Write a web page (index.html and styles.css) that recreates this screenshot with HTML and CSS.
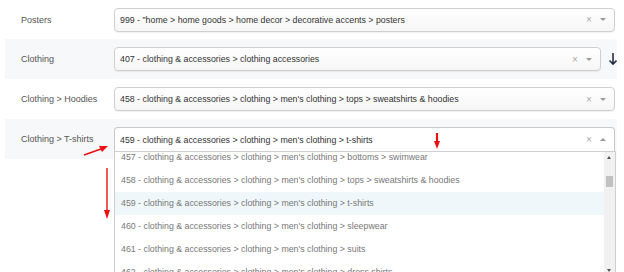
FILE: index.html
```html
<!DOCTYPE html>
<html lang="en">
  <head>
    <meta charset="UTF-8" />
    <title>Category mapping</title>
    <link rel="stylesheet" href="styles.css">
  </head>

  <body>
    <div class="form">
      <div class="row first">
        <label class="lbl">Posters</label>
        <div class="select">
          <span class="val">999 - "home &gt; home goods &gt; home decor &gt; decorative accents &gt; posters</span>
          <span class="clear">&times;</span>
          <span class="caret"></span>
        </div>
      </div>

      <div class="row alt arrowed">
        <label class="lbl">Clothing</label>
        <div class="select">
          <span class="val">407 - clothing &amp; accessories &gt; clothing accessories</span>
          <span class="clear">&times;</span>
          <span class="caret"></span>
        </div>
        <svg class="down" width="16" height="14" viewBox="0 0 16 14">
          <path d="M12 1 V12 M8.5 8.5 L12 12 L15.5 8.5" fill="none" stroke="#223049" stroke-width="1.6" />
        </svg>
      </div>

      <div class="row">
        <label class="lbl">Clothing &gt; Hoodies</label>
        <div class="select">
          <span class="val">458 - clothing &amp; accessories &gt; clothing &gt; men's clothing &gt; tops &gt; sweatshirts &amp; hoodies</span>
          <span class="clear">&times;</span>
          <span class="caret"></span>
        </div>
      </div>

      <div class="row alt open">
        <label class="lbl">Clothing &gt; T-shirts</label>
        <div class="select">
          <span class="val">459 - clothing &amp; accessories &gt; clothing &gt; men's clothing &gt; t-shirts</span>
          <span class="clear">&times;</span>
          <span class="caret up"></span>
        </div>
      </div>

      <div class="drop">
        <ul class="opts">
          <li>457 - clothing &amp; accessories &gt; clothing &gt; men's clothing &gt; bottoms &gt; swimwear</li>
          <li>458 - clothing &amp; accessories &gt; clothing &gt; men's clothing &gt; tops &gt; sweatshirts &amp; hoodies</li>
          <li class="hl">459 - clothing &amp; accessories &gt; clothing &gt; men's clothing &gt; t-shirts</li>
          <li>460 - clothing &amp; accessories &gt; clothing &gt; men's clothing &gt; sleepwear</li>
          <li>461 - clothing &amp; accessories &gt; clothing &gt; men's clothing &gt; suits</li>
          <li>462 - clothing &amp; accessories &gt; clothing &gt; men's clothing &gt; dress shirts</li>
        </ul>
        <div class="sbar">
          <span class="sb-up"></span>
          <span class="sb-thumb"></span>
          <span class="sb-down"></span>
        </div>
      </div>
    </div>

    <!-- red marks drawn over the screenshot -->
    <svg class="marks" width="624" height="272" viewBox="0 0 624 272">
      <g stroke="#f01010" fill="#f01010">
        <path d="M84 155 L101 149" stroke-width="1.6" />
        <path d="M108 146 L99 146 L102 152 Z" stroke="none" />
        <path d="M107 168 V211" stroke-width="1.4" />
        <path d="M104 210 L110 210 L107 219 Z" stroke="none" />
        <path d="M437 133 V142" stroke-width="2.2" />
        <path d="M434 141 L440 141 L437 149 Z" stroke="none" />
      </g>
    </svg>
  </body>
</html>
```

FILE: styles.css
```css
body {
  margin: 0;
  background-color: white;
  font-family: "Liberation Sans", Arial, sans-serif;
  color: #333;
}

.form {
  width: 612px;
  margin-left: 5px;
}

.row {
  display: flex;
  align-items: center;
  height: 40px;
  padding-right: 2px;
}

.row.first {
  height: 39px;
}

.row.arrowed {
  padding-right: 0;
}

.alt {
  background-color: #f7f8fa;
}

.lbl {
  width: 93px;
  padding-left: 16px;
  font-size: 9px;
  color: #555;
}

.select {
  flex: 1;
  display: flex;
  align-items: center;
  height: 22px;
  border: 1px solid #cfcfcf;
  border-radius: 4px;
  background: linear-gradient(#ffffff, #f6f6f6);
  box-shadow: 0 1px 1px rgba(0, 0, 0, 0.06);
  font-size: 8.8px;
  color: #333;
}

.val {
  flex: 1;
  padding-left: 5px;
  white-space: nowrap;
  overflow: hidden;
}

.clear {
  width: 14px;
  color: #aaa;
  font-size: 10px;
  text-align: center;
}

.caret {
  width: 0;
  height: 0;
  margin: 0 8px 0 4px;
  border-left: 3px solid transparent;
  border-right: 3px solid transparent;
  border-top: 3px solid #999;
}

.caret.up {
  border-top: none;
  border-bottom: 3px solid #999;
}

.down {
  width: 16px;
}

.open .select {
  height: 23px;
  border-bottom: none;
  border-radius: 4px 4px 0 0;
  border-color: #c8c8c8;
  background: white;
  box-shadow: none;
}

.drop {
  display: flex;
  width: 500px;
  height: 122px;
  margin: -8px 0 0 109px;
  border: 1px solid #cfcfcf;
  border-bottom: none;
  background-color: white;
  overflow: hidden;
}

.opts {
  list-style: none;
  margin: -6px 0 0 0;
  padding: 0;
  flex: 1;
  font-size: 8.8px;
}

.opts li {
  height: 23px;
  line-height: 23px;
  padding-left: 6px;
  color: #777;
  white-space: nowrap;
}

.opts li.hl {
  background-color: #f0f7fa;
}

.sbar {
  position: relative;
  width: 11px;
  background-color: #f1f1f1;
}

.sb-up {
  position: absolute;
  left: 3px;
  top: 4px;
  border-left: 2.5px solid transparent;
  border-right: 2.5px solid transparent;
  border-bottom: 3px solid #555;
}

.sb-thumb {
  position: absolute;
  left: 2px;
  top: 24px;
  width: 7px;
  height: 11px;
  background-color: #c1c1c1;
}

.sb-down {
  position: absolute;
  left: 3px;
  top: 117px;
  border-left: 2.5px solid transparent;
  border-right: 2.5px solid transparent;
  border-top: 3px solid #555;
}

.marks {
  position: absolute;
  left: 0;
  top: 0;
  pointer-events: none;
}
```
